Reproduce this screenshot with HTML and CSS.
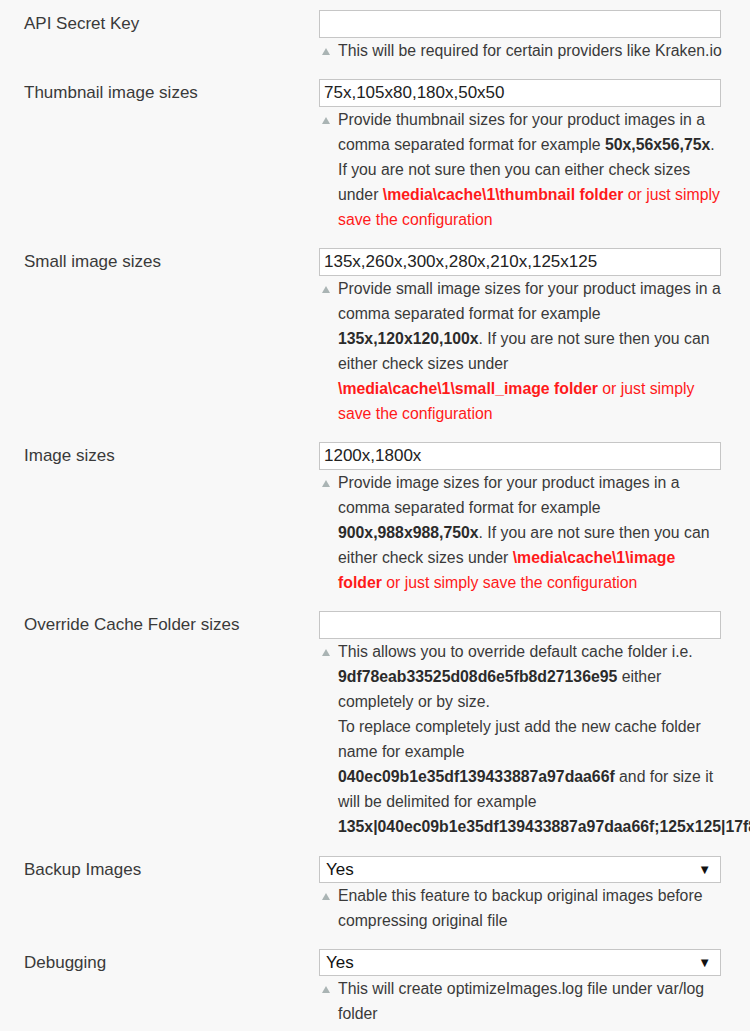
FILE: index.html
```html
<!DOCTYPE html>
<html>
<head>
<meta charset="utf-8">
<link rel="stylesheet" href="styles.css">
</head>
<body>
<div class="page">
  <div class="form">
    <div class="row">
      <div class="label">API Secret Key</div>
      <div class="field">
        <div class="input"></div>
        <div class="note">This will be required for certain providers like Kraken.io</div>
      </div>
    </div>
    <div class="row">
      <div class="label">Thumbnail image sizes</div>
      <div class="field">
        <div class="input">75x,105x80,180x,50x50</div>
        <div class="note">Provide thumbnail sizes for your product images in a comma separated format for example <b>50x,56x56,75x</b>. If you are not sure then you can either check sizes under <span class="red"><b>\media\cache\1\thumbnail folder</b> or just simply save the configuration</span></div>
      </div>
    </div>
    <div class="row">
      <div class="label">Small image sizes</div>
      <div class="field">
        <div class="input">135x,260x,300x,280x,210x,125x125</div>
        <div class="note">Provide small image sizes for your product images in a comma separated format for example <b>135x,120x120,100x</b>. If you are not sure then you can either check sizes under <span class="red"><b>\media\cache\1\small_image folder</b> or just simply save the configuration</span></div>
      </div>
    </div>
    <div class="row">
      <div class="label">Image sizes</div>
      <div class="field">
        <div class="input">1200x,1800x</div>
        <div class="note">Provide image sizes for your product images in a comma separated format for example <b>900x,988x988,750x</b>. If you are not sure then you can either check sizes under <span class="red"><b>\media\cache\1\image folder</b> or just simply save the configuration</span></div>
      </div>
    </div>
    <div class="row row-override">
      <div class="label">Override Cache Folder sizes</div>
      <div class="field">
        <div class="input"></div>
        <div class="note">This allows you to override default cache folder i.e. <b>9df78eab33525d08d6e5fb8d27136e95</b> either completely or by size.<br>To replace completely just add the new cache folder name for example <b>040ec09b1e35df139433887a97daa66f</b> and for size it will be delimited for example <b class="nowrap">135x|040ec09b1e35df139433887a97daa66f;125x125|17f82f742ffe127f42dca9de82fb58b1</b></div>
      </div>
    </div>
    <div class="row">
      <div class="label">Backup Images</div>
      <div class="field">
        <div class="select"><span>Yes</span><span class="arrow">&#9660;</span></div>
        <div class="note">Enable this feature to backup original images before compressing original file</div>
      </div>
    </div>
    <div class="row">
      <div class="label">Debugging</div>
      <div class="field">
        <div class="select"><span>Yes</span><span class="arrow">&#9660;</span></div>
        <div class="note">This will create optimizeImages.log file under var/log folder</div>
      </div>
    </div>
  </div>
</div>
</body>
</html>
```
FILE: styles.css
```css
html, body {
  margin: 0;
  padding: 0;
  background: #f8f8f8;
}
.page {
  width: 750px;
  height: 1031px;
  overflow: hidden;
  font-family: "Liberation Sans", Arial, sans-serif;
  color: #333333;
}
.form {
  padding: 10px 0 0 24px;
  display: flex;
  flex-direction: column;
  gap: 16px;
}
.row {
  display: grid;
  grid-template-columns: 295px 402px;
}
.row-override {
  padding-bottom: 1px;
}
.label {
  font-size: 17px;
  line-height: 28px;
  color: #3a3a3a;
}
.field {
  display: flex;
  flex-direction: column;
}
.input {
  box-sizing: border-box;
  height: 28px;
  border: 1px solid #c6c6c6;
  background: #ffffff;
  font-size: 17px;
  line-height: 26px;
  padding: 0 4px;
  color: #222222;
}
.select {
  box-sizing: border-box;
  height: 27px;
  border: 1px solid #c6c6c6;
  background: #ffffff;
  font-size: 17px;
  line-height: 26px;
  padding: 0 9px 0 6px;
  display: flex;
  justify-content: space-between;
  color: #111111;
}
.arrow {
  font-size: 13px;
  color: #111111;
}
.note {
  position: relative;
  width: 384.5px;
  padding-left: 19px;
  font-size: 15.8px;
  line-height: 25px;
  color: #3a3a3a;
}
.note::before {
  content: "";
  position: absolute;
  left: 3px;
  top: 10px;
  width: 0;
  height: 0;
  border-left: 4.5px solid transparent;
  border-right: 4.5px solid transparent;
  border-bottom: 7px solid #aab4b4;
}
.note b {
  font-weight: bold;
  color: #2b2b2b;
}
.red, .red b {
  color: #ff1a1a;
}
.nowrap {
  white-space: nowrap;
}
```
